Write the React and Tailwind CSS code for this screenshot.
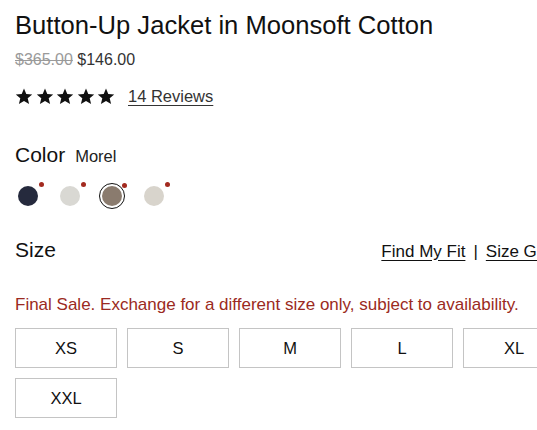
import React from 'react';

const swatches = [
  { name: 'Navy', color: 'bg-[#252a3d]' },
  { name: 'Stone', color: 'bg-[#d9d8d3]' },
  { name: 'Morel', color: 'bg-[#8a7b6e]', selected: true },
  { name: 'Oat', color: 'bg-[#d8d4cc]' },
];

const sizes = ['XS', 'S', 'M', 'L', 'XL', 'XXL'];

const Star = () => (
  <svg width="18" height="17" viewBox="0 0 24 23" className="block">
    <path
      d="M12 0.8l3.1 7.4 8 .6-6.1 5.2 1.9 7.8L12 17.6l-6.9 4.2 1.9-7.8L.9 8.8l8-.6z"
      fill="#111"
    />
  </svg>
);

const App = () => {
  return (
    <div className="w-[537px] h-[430px] overflow-hidden bg-white text-[#111] font-['Liberation_Sans',Arial,sans-serif]">
      <section className="w-[569px] pl-[15px] pt-[10px]">
        <h1 className="text-[25.6px] leading-[30px]">Button-Up Jacket in Moonsoft Cotton</h1>

        <div className="mt-[10px] text-[16px] leading-[20px]">
          <span className="text-[#9a9a9a] line-through">$365.00</span>{' '}
          <span className="text-[#333]">$146.00</span>
        </div>

        {/* rating */}
        <div className="mt-[16px] flex items-center h-[20px]">
          <div className="flex gap-[2.5px]">
            <Star /><Star /><Star /><Star /><Star />
          </div>
          <a href="#" className="ml-[13px] text-[16.5px] text-[#333] underline underline-offset-[3px]">
            14 Reviews
          </a>
        </div>

        {/* color */}
        <div className="mt-[33px] flex items-baseline h-[26px]">
          <span className="text-[21px]">Color</span>
          <span className="ml-[10px] text-[16.5px] text-[#222]">Morel</span>
        </div>

        <div className="mt-[18px] flex items-center gap-[16px]">
          {swatches.map((s) => (
            <button
              key={s.name}
              className={`relative w-[26px] h-[26px] rounded-full flex items-center justify-center ${
                s.selected ? 'border border-[#111]' : ''
              }`}
            >
              <span className={`block w-[20px] h-[20px] rounded-full ${s.color}`} />
              <span className="absolute top-[-1px] right-[-3px] w-[5px] h-[5px] rounded-full bg-[#a32a1f]" />
            </button>
          ))}
        </div>

        {/* size */}
        <div className="mt-[28px] flex items-center justify-between h-[26px]">
          <span className="text-[21px]">Size</span>
          <div className="flex items-center text-[17px] pt-[3px]">
            <a href="#" className="underline underline-offset-[3px]">Find My Fit</a>
            <span className="mx-[8px]">|</span>
            <a href="#" className="underline underline-offset-[3px]">Size Guide</a>
          </div>
        </div>

        <p className="mt-[31px] text-[17px] leading-[22px] text-[#9b2a22]">
          Final Sale. Exchange for a different size only, subject to availability.
        </p>

        <div className="mt-[12px] flex flex-wrap gap-[10px]">
          {sizes.map((size) => (
            <button
              key={size}
              className="w-[102px] h-[40px] border border-[#c4c4c4] text-[16.5px] text-[#111] bg-white"
            >
              {size}
            </button>
          ))}
        </div>
      </section>
    </div>
  );
};

export default App;
